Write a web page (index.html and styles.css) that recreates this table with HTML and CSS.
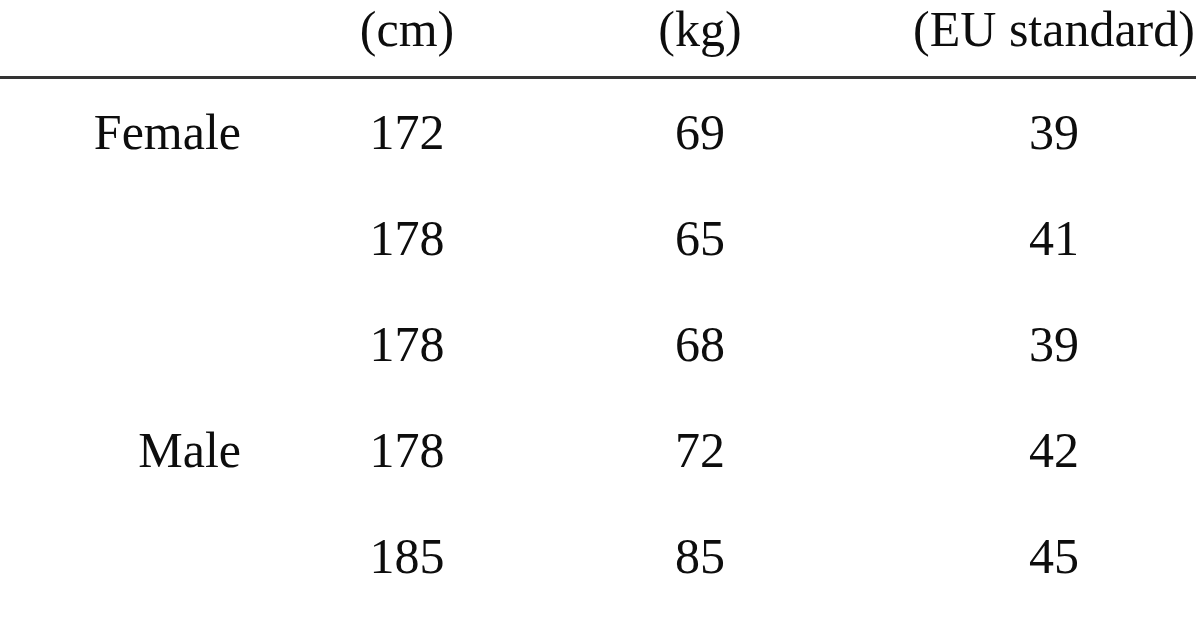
FILE: index.html
```html
<!DOCTYPE html>
<html>
<head>
<meta charset="utf-8">
<link rel="stylesheet" href="styles.css">
</head>
<body>
<table class="data">
  <colgroup>
    <col class="c1"><col class="c2"><col class="c3"><col class="c4">
  </colgroup>
  <thead>
    <tr>
      <th class="label"></th>
      <th>(cm)</th>
      <th>(kg)</th>
      <th>(EU standard)</th>
    </tr>
  </thead>
  <tbody>
    <tr><td class="label">Female</td><td>172</td><td>69</td><td>39</td></tr>
    <tr><td class="label"></td><td>178</td><td>65</td><td>41</td></tr>
    <tr><td class="label"></td><td>178</td><td>68</td><td>39</td></tr>
    <tr><td class="label">Male</td><td>178</td><td>72</td><td>42</td></tr>
    <tr><td class="label"></td><td>185</td><td>85</td><td>45</td></tr>
  </tbody>
</table>
</body>
</html>
```
FILE: styles.css
```css
html, body {
  margin: 0;
  padding: 0;
  background: #ffffff;
  overflow: hidden;
  width: 1196px;
  height: 628px;
}
.data {
  font-family: "Liberation Serif", "Times New Roman", serif;
  font-size: 50px;
  color: #0d0d0d;
  border-collapse: separate;
  border-spacing: 0;
  table-layout: fixed;
  width: 1252px;
}
.c1 { width: 270px; }
.c2 { width: 274px; }
.c3 { width: 312px; }
.c4 { width: 396px; }
.data th {
  font-weight: normal;
  line-height: 53px;
  padding: 3px 0 20px 0;
  border-bottom: 3px solid #333333;
  text-align: center;
  white-space: nowrap;
}
.data td {
  line-height: 106px;
  padding: 0;
  text-align: center;
  white-space: nowrap;
}
.data .label {
  text-align: right;
  padding-right: 29px;
}
```
